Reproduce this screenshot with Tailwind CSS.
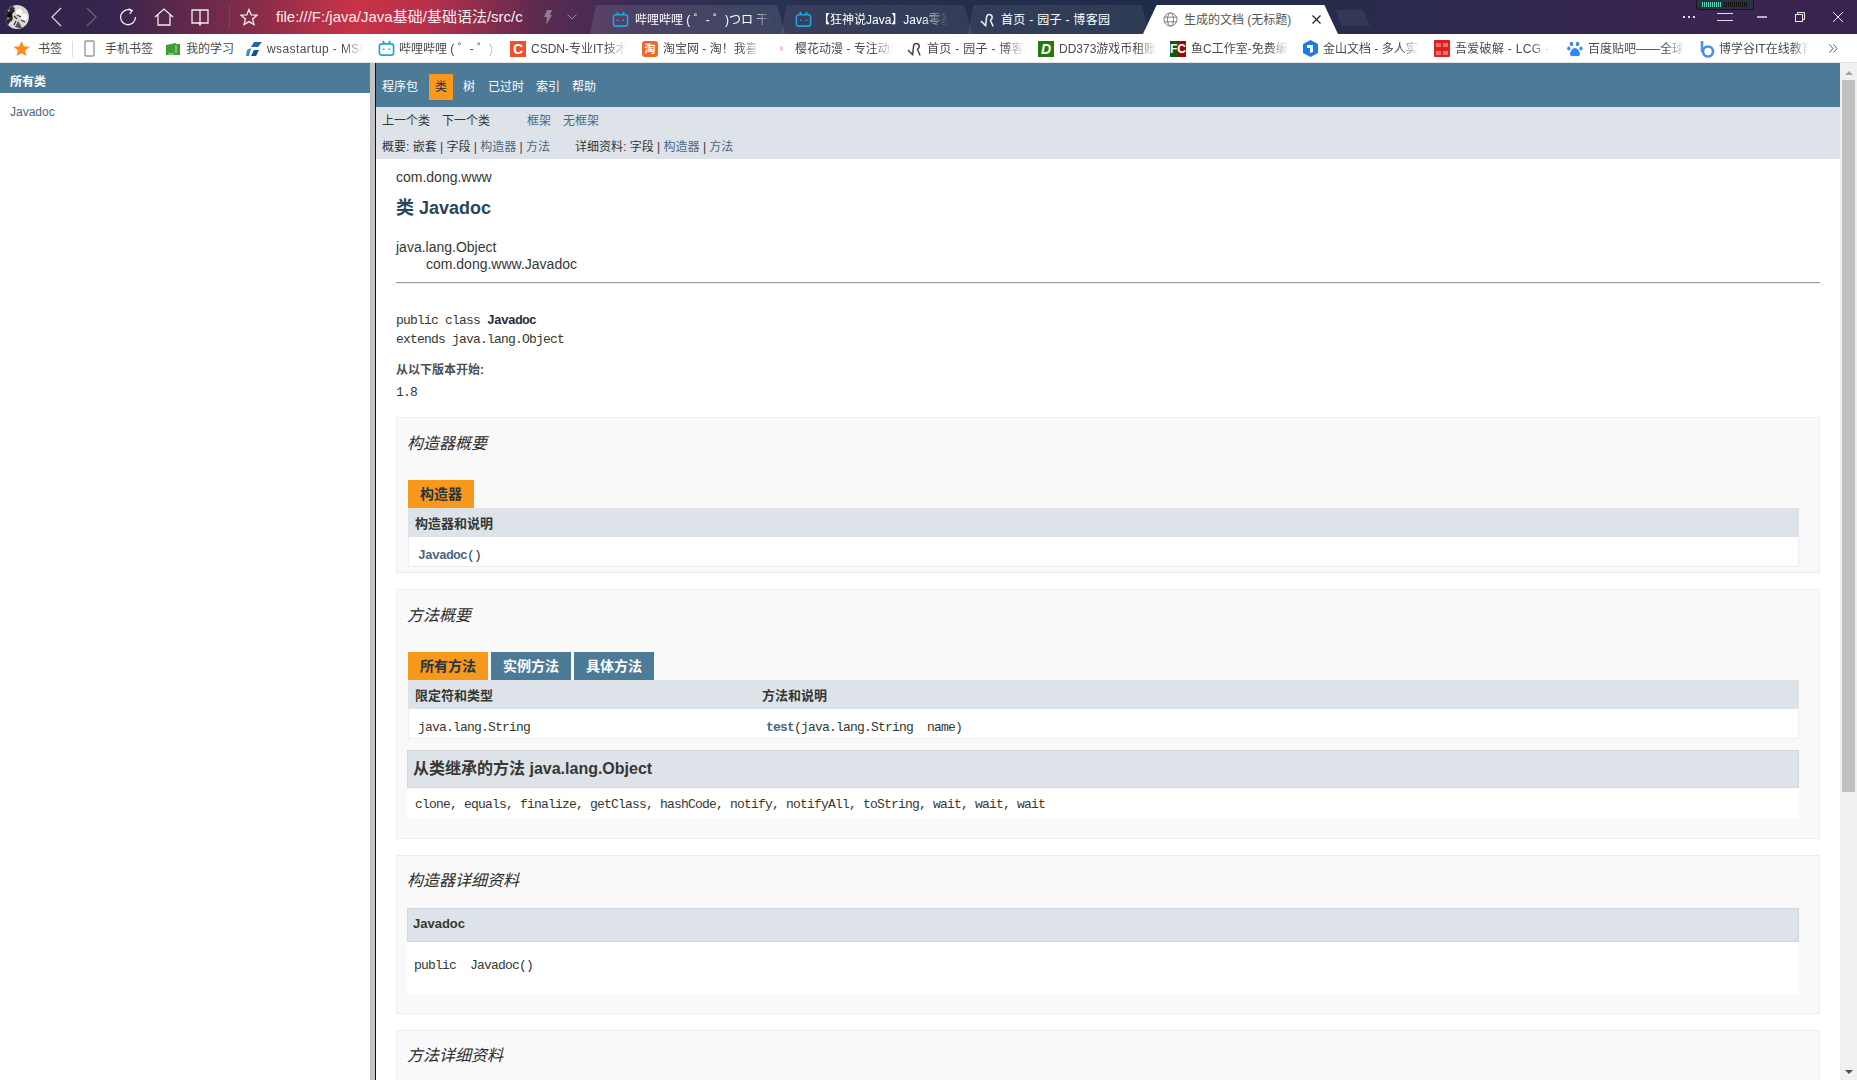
<!DOCTYPE html>
<html lang="zh-CN">
<head>
    <meta charset="UTF-8">
    <title>生成的文档 (无标题)</title>
    <script src="https://cdn.jsdelivr.net/npm/@tailwindcss/browser@4"></script>
</head>
<body class="h-screen overflow-hidden flex flex-col bg-white text-[#353833] font-['Liberation_Sans','Noto_Sans_CJK_SC',sans-serif]">

    <!-- Title bar -->
    <header class="relative h-[34px] shrink-0 flex items-end bg-[linear-gradient(90deg,#30244c_0%,#36254c_6%,#8a2c4a_14%,#c93347_19%,#b8304a_23%,#5c2a50_29%,#3b2c55_34%,#2a3152_40%,#1f2c48_62%,#2a2b4c_74%,#3a2550_90%,#38244e_100%)]">
        <div class="h-[34px] w-[590px] shrink-0 flex items-center text-white">
            <!-- Avatar -->
            <svg class="ml-[5px] w-6 h-6" viewBox="0 0 24 24">
                <circle cx="12" cy="12" r="12" fill="#d8d8d8"/>
                <path d="M0 10 A12 12 0 0 1 8 1 L10 6 L7 9 L8 14 L5 17 L3 20 A12 12 0 0 1 0 10 Z" fill="#2a2a2a"/>
                <path d="M10 22 L13 16 L15 19 L17 23 A12 12 0 0 1 10 22 Z" fill="#555"/>
                <circle cx="5" cy="10" r="2.2" fill="#050505"/>
                <circle cx="19" cy="12" r="3.5" fill="#fafafa"/>
                <circle cx="14" cy="7" r="3" fill="#fff"/>
                <path d="M9 11 L12 14 M11 16 L9 20 M7 4 L10 3 M16 15 L20 17 M4 14 L7 16 M12 10 L16 12" stroke="#333" stroke-width="1.2"/>
                <path d="M3 6 L5 5 M2 14 L4 13 M6 19 L8 17" stroke="#eee" stroke-width="1"/>
            </svg>
            <svg class="ml-[21px] w-3 h-5" viewBox="0 0 12 20" fill="none" stroke="#d8d2dc" stroke-width="1.3"><path d="M11 1 L2 10 L11 19"/></svg>
            <svg class="ml-6 w-3 h-5" viewBox="0 0 12 20" fill="none" stroke="#6d6278" stroke-width="1.3"><path d="M1 1 L10 10 L1 19"/></svg>
            <svg class="ml-[21px] w-[18px] h-[18px]" viewBox="0 0 18 18" fill="none" stroke="#eee" stroke-width="1.3"><path d="M12.5 2.6 A7.5 7.5 0 1 0 16.5 9"/><path d="M9.5 0.8 L13.2 2.6 L10.8 5.8" /></svg>
            <svg class="ml-[17px] w-5 h-[18px]" viewBox="0 0 20 18" fill="none" stroke="#eee" stroke-width="1.3"><path d="M1 9 L10 1 L19 9 M4 7 V17 H16 V7"/></svg>
            <svg class="ml-[17px] w-[18px] h-[18px]" viewBox="0 0 18 18" fill="none" stroke="#eee" stroke-width="1.3"><path d="M1 2 H9 V15 H1 Z M9 2 H17 V15 H9 M8 15 L9 17 L10 15"/></svg>
            <div class="ml-5 w-px h-[24px] bg-white/10"></div>
            <svg class="ml-[10px] w-[18px] h-[18px]" viewBox="0 0 18 18" fill="none" stroke="#eee" stroke-width="1.3"><path d="M9 1.5 L11.2 6.8 L17 7.2 L12.6 11 L14 16.6 L9 13.6 L4 16.6 L5.4 11 L1 7.2 L6.8 6.8 Z"/></svg>
            <div class="ml-[18px] w-[248px] text-[15px] whitespace-nowrap overflow-hidden text-[#f6eef0]">file:///F:/java/Java基础/基础语法/src/c</div>
            <svg class="ml-5 w-2 h-[15px]" viewBox="0 0 8 15" fill="#8d7f8a"><path d="M3 0 H8 L6 5 H8 L2 15 L3 7 H0 Z"/></svg>
            <svg class="ml-[15px] w-[10px] h-[6px]" viewBox="0 0 10 6" fill="none" stroke="#9f8a9c"><path d="M0.5 0.5 L5 5 L9.5 0.5"/></svg>
        </div>

        <!-- Tabs -->
        <div class="flex h-[29px] w-[195px] -mr-[4px] shrink-0 bg-white/10 [clip-path:polygon(0_100%,3%_0,96%_0,100%_100%)] items-center pl-[22px] gap-[6px]">
            <svg class="w-[17px] h-[17px] shrink-0" viewBox="0 0 18 18" fill="none" stroke="#21a5dd" stroke-width="1.7"><rect x="1.5" y="4" width="15" height="12" rx="2.5"/><path d="M5 1 L7 4 M13 1 L11 4"/><path d="M6 9 V10.5 M12 9 V10.5"/></svg>
            <span class="text-[12px] text-white whitespace-nowrap overflow-hidden w-[136px] [mask-image:linear-gradient(to_right,black_85%,transparent)]">哔哩哔哩 ( ゜- ゜)つロ 干杯~</span>
        </div>
        <div class="flex h-[29px] w-[191px] -mr-[4px] shrink-0 bg-white/7 [clip-path:polygon(0_100%,3%_0,96%_0,100%_100%)] items-center pl-[14px] gap-[6px]">
            <svg class="w-[17px] h-[17px] shrink-0" viewBox="0 0 18 18" fill="none" stroke="#21a5dd" stroke-width="1.7"><rect x="1.5" y="4" width="15" height="12" rx="2.5"/><path d="M5 1 L7 4 M13 1 L11 4"/><path d="M6 9 V10.5 M12 9 V10.5"/></svg>
            <span class="text-[12px] text-white whitespace-nowrap overflow-hidden w-[130px] [mask-image:linear-gradient(to_right,black_80%,transparent)]">【狂神说Java】Java零基础学习</span>
        </div>
        <div class="flex h-[29px] w-[181px] -mr-[6px] shrink-0 bg-white/7 [clip-path:polygon(0_100%,3%_0,96%_0,100%_100%)] items-center pl-[12px] gap-[6px]">
            <svg class="w-[15px] h-[16px] shrink-0" viewBox="0 0 16 16" fill="none" stroke="#eee" stroke-width="1.6"><path d="M1 9 L6 14 L7 5 A3 3 0 1 1 11 8 M11 8 L14 15"/></svg>
            <span class="text-[12px] text-white whitespace-nowrap tracking-[0.3px]">首页 - 园子 - 博客园</span>
        </div>
        <div class="flex h-[29px] w-[195px] shrink-0 bg-white [clip-path:polygon(0_100%,7%_0,93%_0,100%_100%)] items-center pl-[20px]">
            <svg class="w-[15px] h-[15px] shrink-0" viewBox="0 0 16 16" fill="none" stroke="#777"><circle cx="8" cy="8" r="7"/><ellipse cx="8" cy="8" rx="3.2" ry="7"/><path d="M1.5 5.5 H14.5 M1.5 10.5 H14.5"/></svg>
            <span class="ml-[6px] text-[12px] text-[#555] whitespace-nowrap">生成的文档 (无标题)</span>
            <svg class="ml-[21px] w-[9px] h-[9px] shrink-0" viewBox="0 0 9 9" stroke="#222" stroke-width="1.2"><path d="M0.5 0.5 L8.5 8.5 M8.5 0.5 L0.5 8.5"/></svg>
        </div>
        <div class="ml-[-2px] mb-2 w-[34px] h-4 bg-white/6 [clip-path:polygon(0_0,80%_0,100%_100%,15%_100%)]"></div>

        <!-- Window controls -->
        <div class="ml-auto h-[34px] flex items-center text-white">
            <span class="flex gap-[3px]"><i class="w-[2px] h-[2px] bg-[#ddd]"></i><i class="w-[2px] h-[2px] bg-[#ddd]"></i><i class="w-[2px] h-[2px] bg-[#ddd]"></i></span>
            <svg class="ml-[22px] w-[16px] h-[10px]" viewBox="0 0 16 10" stroke="#ddd"><path d="M0 1.5 H16 M0 8.5 H16"/></svg>
            <svg class="ml-[24px] w-[10px] h-[2px]" viewBox="0 0 10 2" stroke="#eee" stroke-width="1.4"><path d="M0 1 H10"/></svg>
            <svg class="ml-[28px] w-[10px] h-[10px]" viewBox="0 0 10 10" fill="none" stroke="#eee"><path d="M2.5 2.5 V0.5 H9.5 V7.5 H7.5"/><rect x="0.5" y="2.5" width="7" height="7"/></svg>
            <svg class="ml-[28px] mr-[14px] w-[10px] h-[10px]" viewBox="0 0 10 10" stroke="#eee"><path d="M0 0 L10 10 M10 0 L0 10"/></svg>
        </div>

        <!-- Network meter widget -->
        <div class="absolute left-[1696px] top-0 w-[58px] h-[10px] bg-[#2a3142] border border-t-0 border-[#14161e] rounded-b-[3px] flex items-center px-[5px] gap-[1px]">
            <i class="w-[19px] h-[5px] bg-[repeating-linear-gradient(90deg,#5fd3b0_0,#5fd3b0_1px,transparent_1px,transparent_2px)]"></i>
            <i class="ml-[2px] w-[24px] h-[5px] bg-[repeating-linear-gradient(90deg,#111_0,#111_1px,transparent_1px,transparent_2px)]"></i>
        </div>
    </header>

    <!-- Bookmarks bar -->
    <nav class="h-[29px] shrink-0 flex items-center pt-px bg-white border-b border-[#e4e4e4] text-[12px] text-[#4a4a4a] whitespace-nowrap">
        <svg class="ml-[13px] w-[17px] h-[17px] shrink-0" viewBox="0 0 18 18" fill="#fb8c1a"><path d="M9 1 L11.4 6.6 L17.5 7.1 L12.8 11.1 L14.3 17 L9 13.9 L3.7 17 L5.2 11.1 L0.5 7.1 L6.6 6.6 Z"/></svg>
        <span class="ml-[8px] w-[24px]">书签</span>
        <div class="ml-[10px] w-px h-4 bg-[#ddd]"></div>
        <svg class="ml-[11px] w-[11px] h-[17px] shrink-0" viewBox="0 0 11 17" fill="none" stroke="#999" stroke-width="1.4"><rect x="1" y="1" width="9" height="15" rx="1"/></svg>
        <span class="ml-[10px] w-[48px]">手机书签</span>
        <svg class="ml-[13px] w-[14px] h-[14px] shrink-0" viewBox="0 0 14 14"><path d="M0 3 L10 1 V2 H14 V13 H0 Z" fill="#3d9f35"/><path d="M2 12 H8 M10 3 V11" stroke="#d5ecd2" stroke-width="0.8"/></svg>
        <span class="ml-[6px] w-[47px]">我的学习</span>

        <div class="ml-[13px] flex">
            <div class="w-[132px] flex items-center">
                <svg class="w-[16px] h-[16px] shrink-0" viewBox="0 0 16 16"><path d="M8 1 H16 L12 6 H5 Z" fill="#2b62ad"/><path d="M1 9 L5 7 L3 15 H0 Z" fill="#2e8fd0"/><path d="M8 9 H13 L10 15 H5 Z" fill="#17518f"/></svg>
                <span class="ml-[5px] w-[96px] overflow-hidden tracking-[0.4px] [mask-image:linear-gradient(to_right,black_80%,transparent)]">wsastartup - MSDN</span>
            </div>
            <div class="w-[132px] flex items-center">
                <svg class="w-[17px] h-[17px] shrink-0" viewBox="0 0 18 18" fill="none" stroke="#21a5dd" stroke-width="1.8"><rect x="1.5" y="4" width="15" height="12" rx="2.5"/><path d="M5 1 L7 4 M13 1 L11 4"/><path d="M6 9 V10.5 M12 9 V10.5"/></svg>
                <span class="ml-[4px] w-[97px] overflow-hidden [mask-image:linear-gradient(to_right,black_85%,transparent)]">哔哩哔哩 ( ゜- ゜)つロ 干杯</span>
            </div>
            <div class="w-[132px] flex items-center">
                <span class="w-[16px] h-[16px] shrink-0 bg-[#f0502c] text-white text-[14px] leading-[16px] text-center font-bold">C</span>
                <span class="ml-[5px] w-[95px] overflow-hidden [mask-image:linear-gradient(to_right,black_80%,transparent)]">CSDN-专业IT技术社区</span>
            </div>
            <div class="w-[133px] flex items-center">
                <span class="w-[16px] h-[16px] shrink-0 rounded-[3px] bg-[#f2662a] text-white text-[11px] leading-[16px] text-center font-bold">淘</span>
                <span class="ml-[5px] w-[97px] overflow-hidden [mask-image:linear-gradient(to_right,black_80%,transparent)]">淘宝网 - 淘！我喜欢</span>
            </div>
            <div class="w-[132px] flex items-center">
                <span class="ml-[5px] w-[3px] h-[5px] shrink-0 rounded-full bg-[#f7c5dc]"></span>
                <span class="ml-[12px] w-[98px] overflow-hidden [mask-image:linear-gradient(to_right,black_80%,transparent)]">樱花动漫 - 专注动漫</span>
            </div>
            <div class="w-[131px] flex items-center">
                <svg class="w-[15px] h-[16px] shrink-0" viewBox="0 0 16 16" fill="none" stroke="#444" stroke-width="1.6"><path d="M1 9 L6 14 L7 5 A3 3 0 1 1 11 8 M11 8 L14 15"/></svg>
                <span class="ml-[5px] w-[97px] overflow-hidden tracking-[0.3px] [mask-image:linear-gradient(to_right,black_80%,transparent)]">首页 - 园子 - 博客园</span>
            </div>
            <div class="w-[132px] flex items-center">
                <span class="w-[16px] h-[16px] shrink-0 bg-[#237a0a] text-white text-[14px] leading-[16px] text-center font-bold italic">D</span>
                <span class="ml-[5px] w-[98px] overflow-hidden [mask-image:linear-gradient(to_right,black_80%,transparent)]">DD373游戏币租账号</span>
            </div>
            <div class="w-[133px] flex items-center">
                <span class="w-[16px] h-[16px] shrink-0 bg-[linear-gradient(90deg,#0e5c12_50%,#930d0d_50%)] text-white text-[12px] leading-[16px] text-center font-bold">FC</span>
                <span class="ml-[5px] w-[97px] overflow-hidden [mask-image:linear-gradient(to_right,black_80%,transparent)]">鱼C工作室-免费编程</span>
            </div>
            <div class="w-[131px] flex items-center">
                <svg class="w-[15px] h-[17px] shrink-0" viewBox="0 0 15 17"><path d="M7.5 0 L15 4 V13 L7.5 17 L0 13 V4 Z" fill="#1c7bea"/><path d="M4 5 H10 V12 L7 13 V8 H4 Z" fill="#fff"/></svg>
                <span class="ml-[5px] w-[97px] overflow-hidden [mask-image:linear-gradient(to_right,black_80%,transparent)]">金山文档 - 多人实时</span>
            </div>
            <div class="w-[133px] flex items-center">
                <svg class="w-[16px] h-[17px] shrink-0" viewBox="0 0 16 17"><rect width="16" height="17" rx="1" fill="#e02020"/><path d="M2 4 H7 M2 6 H7 M9 4 H14 M9 6 H14 M2 12 H7 M2 14 H7 M9 12 H14 M9 14 H14" stroke="#f8c0c0"/></svg>
                <span class="ml-[5px] w-[96px] overflow-hidden tracking-[0.3px] [mask-image:linear-gradient(to_right,black_80%,transparent)]">吾爱破解 - LCG - LSG</span>
            </div>
            <div class="w-[132px] flex items-center">
                <svg class="w-[16px] h-[16px] shrink-0" viewBox="0 0 16 16" fill="#3388ff"><ellipse cx="4.5" cy="3" rx="1.7" ry="2.3"/><ellipse cx="10.5" cy="3" rx="1.7" ry="2.3"/><ellipse cx="1.8" cy="7.5" rx="1.6" ry="2.1"/><ellipse cx="14" cy="7.5" rx="1.6" ry="2.1"/><path d="M8 7 C5 7 3 11 3 13 C3 16 6 15 8 15 C10 15 13 16 13 13 C13 11 11 7 8 7 Z"/></svg>
                <span class="ml-[5px] w-[97px] overflow-hidden [mask-image:linear-gradient(to_right,black_80%,transparent)]">百度贴吧——全球领先</span>
            </div>
            <div class="w-[139px] flex items-center">
                <svg class="w-[16px] h-[18px] shrink-0" viewBox="0 0 16 18" fill="none" stroke="#4a8cf7" stroke-width="2.6"><path d="M3 1 V12"/><circle cx="9" cy="11.5" r="5"/></svg>
                <span class="ml-[4px] w-[98px] overflow-hidden [mask-image:linear-gradient(to_right,black_80%,transparent)]">博学谷IT在线教育平台</span>
                <svg class="ml-[20px] w-[9px] h-[9px] shrink-0" viewBox="0 0 9 9" fill="none" stroke="#555"><path d="M0.5 0.5 L4 4.5 L0.5 8.5 M4.5 0.5 L8 4.5 L4.5 8.5"/></svg>
            </div>
        </div>
    </nav>

    <div class="flex-1 min-h-0 flex">
        <!-- All classes frame -->
        <aside class="w-[376px] shrink-0 border-r border-r-[#111]">
            <div class="h-full border-r-[5px] border-r-[#c4c4c4]">
                <div class="h-[30px] bg-[#4d7a97] flex items-center pl-[10px] pt-[8px] text-[12px] font-bold text-white">所有类</div>
                <div class="mt-[11px] pl-[10px] text-[12px] leading-4 text-[#4a6782]">Javadoc</div>
            </div>
        </aside>

        <!-- Class frame -->
        <main class="flex-1 min-w-0 overflow-hidden text-[14px]">
            <div class="h-[44px] bg-[#4d7a97] flex items-center pl-[6px] pt-[4px] text-[12px] text-white">
                <span>程序包</span>
                <span class="ml-[11px] w-[24px] h-[26px] flex items-center justify-center bg-[#f8981d] text-[#253441]">类</span>
                <span class="ml-[10px]">树</span>
                <span class="ml-[13px]">已过时</span>
                <span class="ml-[12px]">索引</span>
                <span class="ml-[12px]">帮助</span>
            </div>
            <div class="h-[52px] bg-[#dee3e9] pl-[6px] text-[12px]">
                <div class="h-[26px] pt-[1px] flex items-center">
                    <span>上一个类</span>
                    <span class="ml-[12px]">下一个类</span>
                    <span class="ml-[37px] text-[#4a6782]">框架</span>
                    <span class="ml-[12px] text-[#4a6782]">无框架</span>
                </div>
                <div class="h-[26px] pt-[1px] flex items-center whitespace-pre">
                    <span>概要: 嵌套 | 字段 | <span class="text-[#4a6782]">构造器</span> | <span class="text-[#4a6782]">方法</span></span>
                    <span class="ml-[25px]">详细资料: 字段 | <span class="text-[#4a6782]">构造器</span> | <span class="text-[#4a6782]">方法</span></span>
                </div>
            </div>

            <div class="pl-[20px] pr-[20px]">
                <div class="mt-[10px] leading-[17px]">com.dong.www</div>
                <h2 class="mt-[11px] text-[18px] leading-[22px] font-bold text-[#2c4557]">类 Javadoc</h2>
                <div class="mt-[20px] leading-[17px]">java.lang.Object</div>
                <div class="pl-[30px] leading-[17px]">com.dong.www.Javadoc</div>
                <div class="mt-[9px] h-[2px] border-t border-t-[#999] border-b border-b-[#eee]"></div>

                <div class="mt-[27px] font-['Liberation_Mono',monospace] text-[13px] tracking-[-0.8px] leading-[19px]">
                    <div>public class <b class="text-[#2c2c3c]">Javadoc</b></div>
                    <div>extends java.lang.Object</div>
                </div>
                <div class="mt-[13px] text-[12px] leading-4 font-bold text-[#4e4e4e]">从以下版本开始:</div>
                <div class="mt-[7px] font-['Liberation_Mono',monospace] text-[13px] tracking-[-0.8px] leading-4">1.8</div>

                <!-- Constructor summary -->
                <section class="mt-[16px] h-[156px] bg-[#f9f9f9] border border-[#ededed] pl-[10px] pr-[20px] pt-[16px]">
                    <h3 class="text-[16px] leading-5 italic text-[#2c2c2c]">构造器概要</h3>
                    <div class="mt-[26px] ml-px">
                        <div class="w-[66px] h-[28px] bg-[#f8981d] flex items-center pl-3 font-bold text-[#253441]">构造器</div>
                        <div class="h-[29px] bg-[#dee3e9] flex items-center pl-[7px] pt-[2px] text-[13px] font-bold">构造器和说明</div>
                        <div class="h-[30px] bg-white border-x border-b border-[#eee] flex items-center pl-[9px] pt-[9px] font-['Liberation_Mono',monospace] text-[13px] tracking-[-0.8px]"><b class="font-bold text-[#4a6782]">Javadoc</b>()</div>
                    </div>
                </section>

                <!-- Method summary -->
                <section class="mt-[16px] h-[250px] bg-[#f9f9f9] border border-[#ededed] pl-[10px] pr-[20px] pt-[16px]">
                    <h3 class="text-[16px] leading-5 italic text-[#2c2c2c]">方法概要</h3>
                    <div class="mt-[26px] ml-px">
                        <div class="flex h-[28px] font-bold">
                            <span class="w-[80px] flex items-center pl-3 bg-[#f8981d] text-[#253441]">所有方法</span>
                            <span class="ml-[3px] w-[80px] flex items-center pl-3 bg-[#4d7a97] text-white">实例方法</span>
                            <span class="ml-[3px] w-[80px] flex items-center pl-3 bg-[#4d7a97] text-white">具体方法</span>
                        </div>
                        <div class="h-[29px] bg-[#dee3e9] flex items-center pl-[7px] pt-[2px] text-[13px] font-bold">
                            <span class="w-[347px]">限定符和类型</span>
                            <span>方法和说明</span>
                        </div>
                        <div class="h-[30px] bg-white border-x border-b border-[#eee] flex items-center pl-[9px] pt-[9px] font-['Liberation_Mono',monospace] text-[13px] tracking-[-0.8px] whitespace-pre">
                            <span class="w-[348px]">java.lang.String</span>
                            <span><b class="text-[#4a6782]">test</b>(java.lang.String  name)</span>
                        </div>
                    </div>
                    <div class="mt-[11px] h-[38px] bg-[#dee3e9] border border-[#d0d9e0] flex items-center pl-[5px] text-[16px] font-bold">从类继承的方法 java.lang.Object</div>
                    <div class="h-[30px] bg-white flex items-center pl-[8px] pt-[3px] font-['Liberation_Mono',monospace] text-[13px] tracking-[-0.8px] whitespace-pre">clone, equals, finalize, getClass, hashCode, notify, notifyAll, toString, wait, wait, wait</div>
                </section>

                <!-- Constructor detail -->
                <section class="mt-[16px] h-[159px] bg-[#f9f9f9] border border-[#ededed] pl-[10px] pr-[20px] pt-[15px]">
                    <h3 class="text-[16px] leading-5 italic text-[#2c2c2c]">构造器详细资料</h3>
                    <div class="mt-[17px] h-[34px] bg-[#dee3e9] border border-[#d0d9e0] flex items-center pl-[5px] pb-[2px] text-[13px] font-bold">Javadoc</div>
                    <div class="h-[52px] bg-white pt-[16px] pl-[7px] font-['Liberation_Mono',monospace] text-[13px] tracking-[-0.8px] leading-4 whitespace-pre">public  Javadoc()</div>
                </section>

                <!-- Method detail -->
                <section class="mt-[16px] h-[200px] bg-[#f9f9f9] border border-[#ededed] pl-[10px] pt-[15px]">
                    <h3 class="text-[16px] leading-5 italic text-[#2c2c2c]">方法详细资料</h3>
                </section>
            </div>
        </main>

        <!-- Scrollbar -->
        <div class="w-[17px] shrink-0 bg-[#f0f0f0] flex flex-col items-center">
            <div class="h-[17px] flex items-center justify-center pt-[2px]">
                <i class="w-0 h-0 border-x-[4px] border-x-transparent border-b-[4px] border-b-[#a3a3a3]"></i>
            </div>
            <div class="w-[13px] h-[712px] bg-[#c1c1c1]"></div>
            <div class="mt-auto h-[17px] flex items-center justify-center">
                <i class="w-0 h-0 border-x-[4px] border-x-transparent border-t-[4px] border-t-[#505050]"></i>
            </div>
        </div>
    </div>
</body>
</html>
